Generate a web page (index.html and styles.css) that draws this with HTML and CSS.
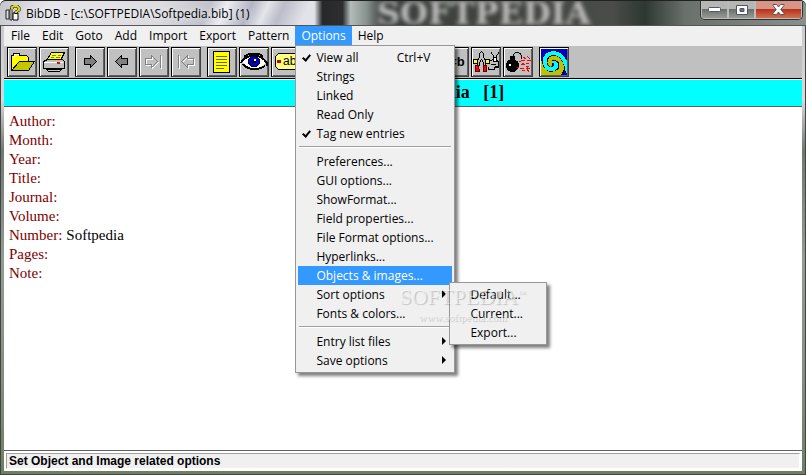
FILE: index.html
```
<!DOCTYPE html>
<html lang="en">
<head>
    <meta charset="UTF-8">
    <title>BibDB</title>
    <link rel="stylesheet" href="styles.css">
</head>
<body>
    <div class="window">
        <header class="title-bar">
            <span class="glass-text" aria-hidden="true">SOFTPEDIA</span>
            <svg class="app-icon" width="16" height="16" viewBox="0 0 16 16">
                <path d="M1 5h3v9H1z" fill="#ddd" stroke="#222"/>
                <path d="M5 4l2-1v12H5z" fill="#fff" stroke="#222"/>
                <path d="M8 8h5v7H8z" fill="#fff" stroke="#000"/>
                <path d="M7 4V2l2-1h3l2 2v2l-3 2v2" fill="none" stroke="#000" stroke-width="3"/>
                <path d="M7 4V2l2-1h3l2 2v2l-3 2v1" fill="none" stroke="#e0d800" stroke-width="2"/>
            </svg>
            <h1 class="caption">BibDB - [c:\SOFTPEDIA\Softpedia.bib] (1)</h1>
            <div class="window-buttons">
                <button type="button" aria-label="Minimize">
                    <svg width="13" height="6" viewBox="0 0 13 6"><rect x=".5" y=".5" width="12" height="4" rx="1" fill="#fff" stroke="#535666"/></svg>
                </button>
                <button type="button" aria-label="Maximize">
                    <svg width="12" height="10" viewBox="0 0 12 10"><path fill-rule="evenodd" d="M.5.5h11v9H.5zM4 3.500v3h4v-3z" fill="#fff" stroke="#535666"/></svg>
                </button>
                <button type="button" class="close" aria-label="Close">
                    <svg width="13" height="11" viewBox="0 0 13 11"><path d="M1 .5h3.500L6.500 3l2-2.500H12v1L8.800 5.500 12 9.500v1H8.500l-2-2.500-2 2.500H1v-1l3.200-4L1 1.500z" fill="#fff" stroke="#535666"/></svg>
                </button>
            </div>
        </header>

        <nav class="menu-bar">
            <button type="button">File</button>
            <button type="button">Edit</button>
            <button type="button">Goto</button>
            <button type="button">Add</button>
            <button type="button">Import</button>
            <button type="button">Export</button>
            <button type="button">Pattern</button>
            <div class="menu-root">
                <button type="button" class="open">Options</button>
                <ul class="menu">
                    <li><button type="button" class="checked">View all<kbd>Ctrl+V</kbd></button></li>
                    <li><button type="button">Strings</button></li>
                    <li><button type="button">Linked</button></li>
                    <li><button type="button">Read Only</button></li>
                    <li><button type="button" class="checked">Tag new entries</button></li>
                    <li class="separator"></li>
                    <li><button type="button">Preferences...</button></li>
                    <li><button type="button">GUI options...</button></li>
                    <li><button type="button">ShowFormat...</button></li>
                    <li><button type="button">Field properties...</button></li>
                    <li><button type="button">File Format options...</button></li>
                    <li><button type="button">Hyperlinks...</button></li>
                    <li><button type="button" class="selected">Objects &amp; images...</button></li>
                    <li class="has-submenu">
                        <button type="button" class="parent">Sort options</button>
                        <ul class="menu submenu">
                            <li><button type="button">Default...</button></li>
                            <li><button type="button">Current...</button></li>
                            <li><button type="button">Export...</button></li>
                        </ul>
                        <div class="watermark" aria-hidden="true">
                            <span class="brand">SOFTPEDIA<sup>™</sup></span>
                            <span class="site">www.softpedia.com</span>
                        </div>
                    </li>
                    <li><button type="button">Fonts &amp; colors...</button></li>
                    <li class="separator"></li>
                    <li><button type="button" class="parent">Entry list files</button></li>
                    <li><button type="button" class="parent">Save options</button></li>
                </ul>
            </div>
            <button type="button">Help</button>
        </nav>

        <div class="toolbar">
            <div class="group">
                <button type="button" aria-label="Open">
                    <svg viewBox="0 0 30 30">
                        <path d="M4.500 23.500v-15h2v-2h6v2h7l2 2v4h-8z" fill="#ff0" stroke="#000"/>
                        <path d="M5.500 9.500h2v-2h4" fill="none" stroke="#fff"/>
                        <path d="M12.500 14.500h15l-6 9h-17z" fill="#c6c600" stroke="#000"/>
                    </svg>
                </button>
                <button type="button" aria-label="Print">
                    <svg viewBox="0 0 30 30">
                        <path d="M12.500 5.500h13l-4 8h-14z" fill="#ff0" stroke="#000"/>
                        <path d="M13 8h4m2 0h3M12 10h3m2 0h4M10 12h5m2 0h3" stroke="#777" fill="none"/>
                        <path d="M4.500 14.500l4-2h15l2 2v7h-21z" fill="#c0c0c0" stroke="#000"/>
                        <path d="M5 15.500h19" stroke="#fff"/>
                        <path d="M18 15h3v2h-3z" fill="#f00"/>
                        <path d="M7.500 22.500h15l-2 2h-11z" fill="#ccc" stroke="#000"/>
                    </svg>
                </button>
            </div>
            <div class="group">
                <button type="button" aria-label="Next">
                    <svg viewBox="0 0 30 30"><path d="M9.500 11.500h6v-3l6 6-6 6v-3h-6z" fill="#808080" stroke="#000"/></svg>
                </button>
                <button type="button" aria-label="Previous">
                    <svg viewBox="0 0 30 30"><path d="M20.500 11.500h-6v-3l-6 6 6 6v-3h6z" fill="#808080" stroke="#000"/></svg>
                </button>
                <button type="button" aria-label="Last" disabled>
                    <svg viewBox="0 0 30 30" fill="none">
                        <path d="M7.500 12.500h6v-3l6 6-6 6v-3h-6zM22.500 9v13" stroke="#fff"/>
                        <path d="M6.500 11.500h6v-3l6 6-6 6v-3h-6zM21.500 8v13" stroke="#808080"/>
                    </svg>
                </button>
                <button type="button" aria-label="First" disabled>
                    <svg viewBox="0 0 30 30" fill="none">
                        <path d="M23.500 12.500h-6v-3l-6 6 6 6v-3h6zM8.500 9v13" stroke="#fff"/>
                        <path d="M22.500 11.500h-6v-3l-6 6 6 6v-3h6zM7.500 8v13" stroke="#808080"/>
                    </svg>
                </button>
            </div>
            <div class="group">
                <button type="button" aria-label="Entry">
                    <svg viewBox="0 0 30 30">
                        <path d="M6.500 4.500h16v21h-16z" fill="#ff0" stroke="#000"/>
                        <path d="M9 9.500h11M9 12.500h11M9 15.500h11M9 18.500h11M9 21.500h8" stroke="#660"/>
                    </svg>
                </button>
                <button type="button" aria-label="View">
                    <svg viewBox="0 0 30 30">
                        <path d="M3 15c4-6 18-9 24 1-5 6-16 7-20 3z" fill="#fff"/>
                        <path d="M2 16c3-7 18-12 26 0v3M5 10c5-5 15-4 19-1M4 17c2 3 4 3 5 4 6 2 13 1 17-2" fill="none" stroke="#000" stroke-width="2"/>
                        <circle cx="15" cy="14.500" r="5.500" fill="#00c" stroke="#000"/>
                        <circle cx="15" cy="14.500" r="2" fill="#000"/>
                        <path d="M15 12h2v2h-2z" fill="#fff"/>
                    </svg>
                </button>
                <button type="button" aria-label="Label">
                    <svg viewBox="0 0 30 30">
                        <path d="M7.500 6.500H30v16H7.500l-3-3v-10z" fill="#ffff80" stroke="#000"/>
                        <circle cx="8" cy="14.500" r="2" fill="#c00"/>
                        <text x="12" y="18" class="icon-text">ab</text>
                    </svg>
                </button>
            </div>
            <div class="group">
                <button type="button" aria-label="Cut"></button>
                <button type="button" aria-label="Copy"></button>
            </div>
            <div class="group">
                <button type="button" aria-label="Paste"></button>
                <button type="button" aria-label="Find"></button>
                <button type="button" aria-label="Replace">
                    <svg viewBox="0 0 30 30"><text x="3" y="19" class="icon-text bold">a=b</text></svg>
                </button>
                <button type="button" aria-label="Tools">
                    <svg viewBox="0 0 30 30">
                        <path d="M2.500 12.500h5v4h-5zM13.500 12.500h5v4h-5z" fill="#ff0" stroke="#000"/>
                        <path d="M6.500 18.500v-5l2-3v-4l2-2 2 2v4l2 3v5h-2v-3l-2-3-2 3v3z" fill="#c0c0c0" stroke="#000"/>
                        <path d="M4.500 18.500h3l1 6h-4zM12.500 18.500h3v6h-3z" fill="#f00" stroke="#600"/>
                        <path d="M19.500 13.500l3-1v-4l-2-2v-2m7 0v2l-2 2v5l2 1v6h-4v2h-6v-3M20 17h5M24 19h3" fill="none" stroke="#000"/>
                        <path d="M22.500 10.500h3v4h-3z" fill="#fff" stroke="#000"/>
                    </svg>
                </button>
                <button type="button" aria-label="Delete">
                    <svg viewBox="0 0 30 30">
                        <circle cx="9.500" cy="18.500" r="6.500"/>
                        <path d="M7 9h5v4H7z"/>
                        <path d="M10 9c0-3 4-4 6-3s3 3 3 6" fill="none" stroke="#000"/>
                        <path d="M6 17h2v2H6z" fill="#fff"/>
                        <path d="M20 10l3 2m1-3l3 3m-9 1l4 1m2-1h4m-9 3h2m2 0h3m-8 2l4-1m1 2h3m-9 2h4m2 0h4m-8 2l3 1m2-2l2 3m-12-5h2m0-6h2m6 6v4" fill="none" stroke="#f00"/>
                    </svg>
                </button>
            </div>
            <div class="group">
                <button type="button" aria-label="Swirl">
                    <svg viewBox="2 2 26 26" class="swirl">
                        <path d="M2 2h26v26H2z" fill="#00c"/>
                        <path d="M2 13l3 8 15 2 5-3-3 8H2z" fill="#c0c000"/>
                        <path d="M22 25C26 18 22 10 15 11C10 12 10 17 13 18" fill="none" stroke="#000" stroke-width="6"/>
                        <path d="M20 26C26 18 22 10 15 11C10 12 10 17 13 18" fill="none" stroke="#c0c000" stroke-width="5"/>
                        <path d="M29 26C27 12 22 6 14 6C6 7 4 14 7 19C10 24 17 23 17 18C17 16 15 15 14 16" fill="none" stroke="#000" stroke-width="5"/>
                        <path d="M29 26C27 12 22 6 14 6C6 7 4 14 7 19C10 24 17 23 17 18C17 16 15 15 14 16" fill="none" stroke="#0ff" stroke-width="4"/>
                    </svg>
                </button>
            </div>
        </div>

        <h2 class="entry-title">ARTICLE&nbsp;&nbsp; Softpedia&nbsp;&nbsp; [1]</h2>

        <main class="entry">
            <dl>
                <div><dt>Author:</dt></div>
                <div><dt>Month:</dt></div>
                <div><dt>Year:</dt></div>
                <div><dt>Title:</dt></div>
                <div><dt>Journal:</dt></div>
                <div><dt>Volume:</dt></div>
                <div><dt>Number:</dt><dd>Softpedia</dd></div>
                <div><dt>Pages:</dt></div>
                <div><dt>Note:</dt></div>
            </dl>
        </main>

        <footer class="status-bar">
            <p>Set Object and Image related options</p>
        </footer>
    </div>
</body>
</html>
```

FILE: styles.css
```
*,
*::before,
*::after {
    box-sizing: border-box;
}

body {
    margin: 0;
    font-family: "Open Sans", "Noto Sans", sans-serif;
    font-size: 12px;
    color: #000;
}

button {
    margin: 0;
    padding: 0;
    border: none;
    background: none;
    font: inherit;
    color: inherit;
    white-space: nowrap;
}

svg {
    display: block;
}

/* Window frame */
.window {
    display: flex;
    flex-direction: column;
    min-height: 100vh;
    padding: 0 4px 4px;
    background: linear-gradient(#c4c6cc 0, #d8d8d8 100px, #6f7a70 150px, #939c92 260px, #848e80 380px, #6b8060 100%);
    border-radius: 6px 6px 0 0;
    box-shadow: inset 0 0 0 1px #444;
}

.title-bar {
    position: relative;
    display: flex;
    align-items: center;
    height: 26px;
    margin: 0 -4px;
    padding-left: 5px;
    overflow: hidden;
    border-top: 1px solid #222;
    border-bottom: 1px solid #555;
    border-radius: 6px 6px 0 0;
    background:
        linear-gradient(90deg, transparent 39%, #26282a 40%, #2c2e2f 42.500%, #b4bcba 43.500%, #87918e 45.500%, #3c403e 47.500%, #41433f 60%, #4a4c49 76%, #2e3833 80%, #6a706b 85%, #8b8f8b 100%),
        linear-gradient(115deg, #c4c5cc 0, #e6e6ea 6%, #dcdce0 20%, #c2c2cc 26%, #ececf2 28%, #b4b4c4 31%, #e4e4ea 33%, #bcbccb 35%, #e2e2e8 38%, #dcdce2 100%);
}

.app-icon,
.caption,
.window-buttons {
    position: relative;
}

.caption {
    margin: 0 0 0 5px;
    font-size: 12px;
    font-weight: normal;
    text-shadow: 0 0 6px #fff;
}

.glass-text {
    position: absolute;
    left: 377px;
    top: 0;
    font: bold 32px/24px "DejaVu Serif", serif;
    color: transparent;
    text-shadow: 0 0 4px #bbb;
}

.window-buttons {
    display: flex;
    align-self: flex-start;
    margin: 0 3px 0 auto;
    border: 1px solid #333;
    border-top: none;
    border-radius: 0 0 5px 5px;
    overflow: hidden;
}

.window-buttons button {
    display: flex;
    align-items: center;
    justify-content: center;
    width: 27px;
    height: 18px;
    border: 1px solid #bbb;
    border-top: none;
    background: linear-gradient(#b4b7b4 45%, #6b706c 50%, #979b97);
}

.window-buttons .close {
    width: 47px;
    background: linear-gradient(#d89585 45%, #b8341c 50%, #d07050);
}

/* Menus */
.menu-bar {
    display: flex;
    height: 20px;
    padding-left: 1px;
    background: #f0f0f0;
}

.menu-bar > button,
.menu-root > button {
    height: 19px;
    padding: 0 6px 1px;
}

.menu-bar .open,
.menu .selected {
    background: #3399ff;
    color: #fff;
}

.menu-root {
    position: relative;
}

.menu {
    position: absolute;
    z-index: 1;
    top: 19px;
    left: 0;
    width: 160px;
    margin: 0;
    padding: 2px;
    list-style: none;
    background: #f0f0f0;
    border: 1px solid #979797;
    box-shadow: 3px 3px 3px rgba(0, 0, 0, 0.5);
}

.menu button {
    position: relative;
    display: flex;
    justify-content: space-between;
    align-items: center;
    width: 100%;
    height: 19px;
    padding: 0 22px 1px 18px;
}

.menu kbd {
    font: inherit;
}

.menu .checked::before {
    content: "";
    position: absolute;
    left: 6px;
    top: 5px;
    width: 5px;
    height: 8px;
    border: solid #000;
    border-width: 0 2px 2px 0;
    transform: rotate(40deg);
}

.menu .parent::after {
    content: "";
    position: absolute;
    right: 6px;
    top: 5px;
    border: 4px solid transparent;
    border-left-color: #000;
    border-right: none;
}

.separator {
    height: 9px;
    padding-top: 3px;
}

.separator::before {
    content: "";
    display: block;
    height: 2px;
    margin: 0 1px;
    background: #a0a0a0;
    border-bottom: 1px solid #fff;
}

.has-submenu {
    position: relative;
}

.submenu {
    z-index: 2;
    top: -3px;
    left: 151px;
    width: 98px;
}

.watermark {
    position: absolute;
    z-index: 3;
    top: -3px;
    left: 101px;
    display: flex;
    flex-direction: column;
    align-items: center;
    font-family: "Liberation Serif", serif;
    color: rgba(255, 255, 255, 0.5);
    text-shadow: 1px 1px 1px rgba(0, 0, 0, 0.2);
    pointer-events: none;
}

.brand {
    font-size: 22px;
    line-height: 24px;
}

.brand sup {
    font-size: 8px;
}

.site {
    font-size: 11px;
    line-height: 16px;
}

/* Toolbar */
.toolbar {
    display: flex;
    gap: 6px;
    height: 33px;
    padding: 1px 3px;
    background: #c0c0c0;
    border-bottom: 1px solid #000;
}

.group {
    display: flex;
    gap: 2px;
}

.toolbar button {
    width: 30px;
    height: 30px;
    background: #c0c0c0;
    border: 1px solid #000;
    border-right-color: #404040;
    border-bottom-color: #404040;
    box-shadow: inset 1px 1px #fff, inset -1px -1px #606060;
}

.toolbar svg {
    width: 30px;
    height: 30px;
    margin: -1px;
    shape-rendering: crispEdges;
}

.toolbar .swirl {
    width: 26px;
    height: 26px;
    margin: 1px;
}

.icon-text {
    font-family: "Liberation Sans", sans-serif;
    font-size: 12px;
}

.icon-text.bold {
    font-size: 13px;
    font-weight: bold;
}

/* Entry */
.entry-title {
    margin: 0;
    height: 28px;
    border-top: 1px solid #fff;
    border-bottom: 1px solid #606060;
    background: #0ff;
    font: bold 18px/24px "Liberation Serif", serif;
    text-align: center;
}

.entry {
    flex: 1;
    padding: 5px;
    background: #fff;
    font: 15px/19px "Liberation Serif", serif;
}

.entry dl {
    margin: 0;
}

.entry dl div {
    display: flex;
    gap: 4px;
}

.entry dt {
    color: #800000;
}

.entry dd {
    margin: 0;
}

.status-bar {
    padding: 2px;
    border-top: 1px solid #606060;
    background: #fff;
}

.status-bar p {
    margin: 0;
    padding: 1px 2px;
    border: 1px solid #a0a0a0;
    border-right-color: #fff;
    border-bottom-color: #fff;
    background: #f0f0f0;
    font: bold 12px/12px "Liberation Sans", sans-serif;
}
```
